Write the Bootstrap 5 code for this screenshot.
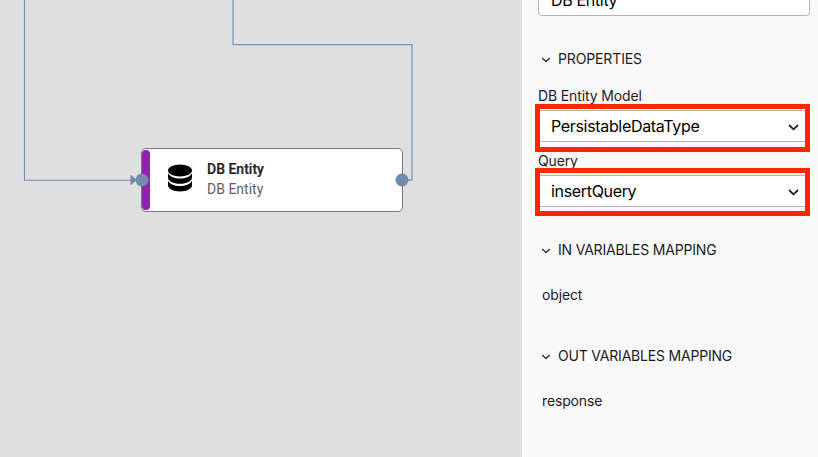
<!DOCTYPE html>
<html lang="en">
<head>
<meta charset="utf-8">
<title>DB Entity</title>
<link href="https://cdn.jsdelivr.net/npm/bootstrap@5.3.0/dist/css/bootstrap.min.css" rel="stylesheet">
<style>
body{width:818px;height:457px;font-family:Inter,"Liberation Sans",sans-serif;background:#dfdfdf;color:#1c1c1e}
.canvas{width:522px;background:#dfdfdf}
.wires{left:0;top:0}
.node{left:141px;top:148px;width:262px;height:64px;border:1px solid #77748f;border-radius:5px;font-family:Roboto,sans-serif;font-size:14px;line-height:20px}
.node-bar{width:8px;height:60px;margin-top:1px;border-radius:4px;background:#8e24aa}
.node-icon{margin-left:17px;margin-top:-4px}
.node-text{margin-left:14px;margin-top:-2px}
.node-title{font-weight:500;color:#212121;-webkit-text-stroke:.2px #212121}
.node-sub{color:#616161}
.panel{width:296px;padding:0 8px 0 16px;background:#f9f9f9}
.name-field{height:38px;margin-top:-22px;padding-left:12px;border:1px solid #b5b5b5;border-radius:4px;line-height:42px}
.value{font-size:16px;letter-spacing:-.33px;color:#000}
.head{height:20px;font-size:14px;line-height:20px;padding-left:3px;letter-spacing:-.2px}
.head-first{letter-spacing:-.13px}
.head svg{margin-right:7px}
.field-label{height:16px;font-size:14px;line-height:16px;letter-spacing:-.13px}
.label-low{line-height:18px}
.marked{width:275px;height:48px;margin-left:-3px;border:5px solid #ff2600;padding-top:1px}
.marked-low{padding-top:2px}
.pick{height:32px;border-top:1px solid #b5b5b5;border-bottom:1px solid #b5b5b5;padding:0 6px 0 11px}
.item{height:20px;font-size:14px;line-height:20px;padding-left:4px;letter-spacing:-.15px}
.g1{margin-top:33px}.g2{margin-top:19px}.g3{margin-top:24px}.g4{margin-top:25px}.g5{margin-top:41px}
</style>
</head>
<body class="d-flex overflow-hidden m-0">
<main class="canvas position-relative flex-shrink-0 h-100">
  <svg class="wires position-absolute" width="522" height="457" fill="none">
    <path d="M24.5 0V180.2H131" stroke="#7090b4" stroke-width="1.1"/>
    <path d="M233 0V44.6H412V180H402" stroke="#7d99b6" stroke-width="1.3"/>
    <path d="M130.500 174.500V185.500L137 180Z" fill="#6f8ba9"/>
  </svg>
  <div class="node position-absolute d-flex bg-white">
    <div class="node-bar"></div>
    <div class="node-icon align-self-center">
      <svg class="d-block" width="26" height="28" viewBox="0 0 26 28">
        <ellipse cx="13" cy="6.500" rx="12" ry="6.100"/>
        <path d="M1 9.200C3 12.600 7.500 14.600 13 14.600S23 12.600 25 9.200V13.700C25 17 19.700 19.700 13 19.700S1 17 1 13.700ZM1 16.700C3 20 7.500 22 13 22S23 20 25 16.700V21.300C25 24.800 19.700 27.500 13 27.500S1 24.800 1 21.300Z"/>
      </svg>
    </div>
    <div class="node-text align-self-center">
      <div class="node-title">DB Entity</div>
      <div class="node-sub">DB Entity</div>
    </div>
  </div>
  <svg class="wires position-absolute" width="522" height="457" fill="#6f8ba9">
    <circle cx="142" cy="180" r="6.500"/><circle cx="402" cy="180" r="6.500"/>
  </svg>
</main>
<aside class="panel flex-shrink-0 h-100 d-flex flex-column overflow-hidden">
  <div class="name-field value bg-white flex-shrink-0">DB Entity</div>
  <div class="head head-first g1 d-flex align-items-center"><svg width="10" height="10" fill="none" stroke="#333" stroke-width="1.400"><path d="M1.200 4L5 7.600 8.800 4"/></svg>PROPERTIES</div>
  <label class="field-label g2">DB Entity Model</label>
  <div class="marked"><div class="pick value bg-white d-flex align-items-center justify-content-between">PersistableDataType<svg width="11" height="10" fill="none" stroke="#222" stroke-width="1.800"><path d="M1 4L5.500 8.300 10 4"/></svg></div></div>
  <label class="field-label label-low">Query</label>
  <div class="marked marked-low"><div class="pick value bg-white d-flex align-items-center justify-content-between">insertQuery<svg width="11" height="10" fill="none" stroke="#222" stroke-width="1.800"><path d="M1 4L5.500 8.300 10 4"/></svg></div></div>
  <div class="head g3 d-flex align-items-center"><svg width="10" height="10" fill="none" stroke="#333" stroke-width="1.400"><path d="M1.200 4L5 7.600 8.800 4"/></svg>IN VARIABLES MAPPING</div>
  <div class="item g4">object</div>
  <div class="head g5 d-flex align-items-center"><svg width="10" height="10" fill="none" stroke="#333" stroke-width="1.400"><path d="M1.200 4L5 7.600 8.800 4"/></svg>OUT VARIABLES MAPPING</div>
  <div class="item g4">response</div>
</aside>
<script src="https://cdn.jsdelivr.net/npm/bootstrap@5.3.0/dist/js/bootstrap.bundle.min.js"></script>
</body>
</html>
